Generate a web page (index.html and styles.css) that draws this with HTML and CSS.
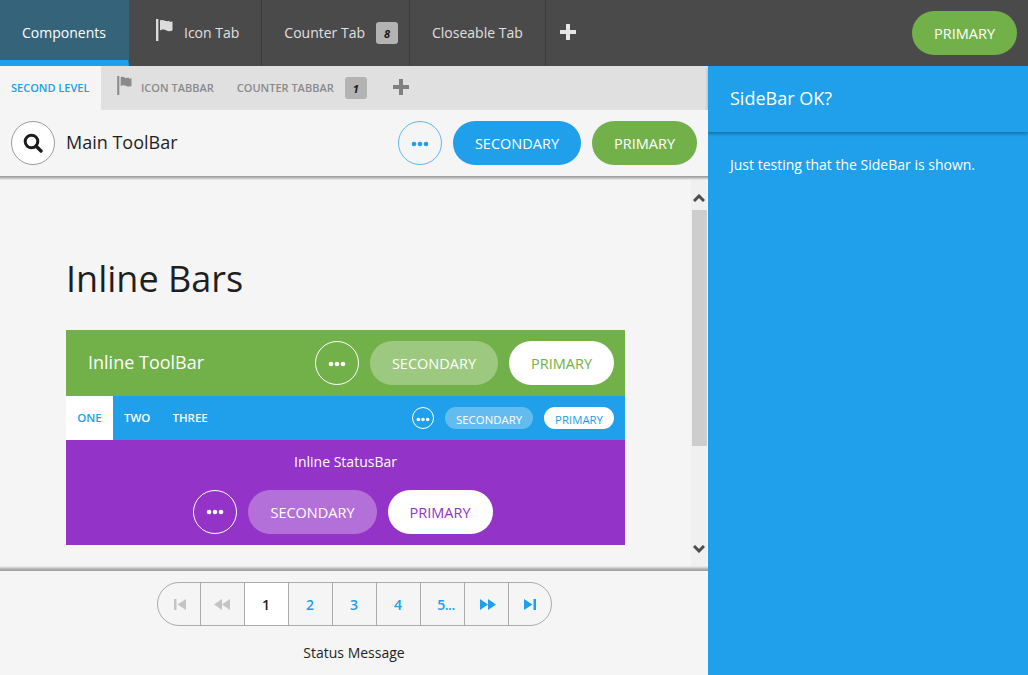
FILE: index.html
```html
<!DOCTYPE html>
<html lang="en">
<head>
<meta charset="utf-8">
<title>Inline Bars</title>
<link rel="stylesheet" href="styles.css">
</head>
<body>
<svg class="defs" width="0" height="0" aria-hidden="true">
  <defs>
    <symbol id="flag" viewBox="0 0 18 22"><path d="M0 0h2.400v22H0z"/><path d="M4 1.500c1.500-.8 3-.6 4.500.1s3 .8 5 .2v1.300l3-.6v9c-2.500 1-4.500.8-6 0s-3-1-3.500-.9-2 .4-3 .9z"/></symbol>
    <symbol id="plus" viewBox="0 0 16 16"><path d="M6 0h4v6h6v4h-6v6H6v-6H0V6h6z"/></symbol>
    <symbol id="dots" viewBox="0 0 18 6"><circle cx="3" cy="3" r="2.300"/><circle cx="9" cy="3" r="2.300"/><circle cx="15" cy="3" r="2.300"/></symbol>
  </defs>
</svg>
<div class="app">
  <header class="topbar">
    <nav class="top-tabs">
      <a class="top-tab is-active">Components</a>
      <a class="top-tab tab-icon"><svg class="flag-lg"><use href="#flag"/></svg>Icon Tab</a>
      <a class="top-tab tab-counter">Counter Tab<span class="badge">8</span></a>
      <a class="top-tab">Closeable Tab</a>
      <a class="top-add"><svg class="plus"><use href="#plus"/></svg></a>
    </nav>
    <button class="btn btn-green">Primary</button>
  </header>
  <div class="below">
    <main class="main">
      <nav class="sub-tabs">
        <a class="sub-tab is-active">Second Level</a>
        <a class="sub-tab"><svg class="flag-sm"><use href="#flag"/></svg>Icon TabBar</a>
        <a class="sub-tab">Counter TabBar<span class="badge">1</span></a>
        <a class="sub-add"><svg class="plus"><use href="#plus"/></svg></a>
      </nav>
      <div class="toolbar">
        <button class="round round-search" aria-label="Search">
          <svg width="20" height="20" viewBox="0 0 20 20"><circle cx="8.500" cy="8.500" r="6.300" fill="none" stroke="#1c1c1c" stroke-width="3"/><path d="M13 13l5 5" stroke="#1c1c1c" stroke-width="3.400" stroke-linecap="round"/></svg>
        </button>
        <span class="toolbar-title">Main ToolBar</span>
        <span class="spacer"></span>
        <button class="round round-blue" aria-label="More"><svg class="dots dots-low"><use href="#dots"/></svg></button>
        <button class="btn btn-blue">Secondary</button>
        <button class="btn btn-green">Primary</button>
      </div>
      <div class="scroll-area">
        <section class="content">
          <h1 class="heading">Inline Bars</h1>
          <div class="inline-bars">
            <div class="inline-toolbar">
              <span class="inline-title">Inline ToolBar</span>
              <span class="spacer"></span>
              <button class="round round-white" aria-label="More"><svg class="dots dots-low"><use href="#dots"/></svg></button>
              <button class="btn btn-ghost">Secondary</button>
              <button class="btn btn-white txt-green">Primary</button>
            </div>
            <div class="inline-tabs">
              <a class="mini-tab is-active">One</a>
              <a class="mini-tab">Two</a>
              <a class="mini-tab">Three</a>
              <span class="spacer"></span>
              <button class="round-sm" aria-label="More"><svg class="dots-sm"><use href="#dots"/></svg></button>
              <button class="btn-sm btn-sm-ghost">Secondary</button>
              <button class="btn-sm btn-sm-white">Primary</button>
            </div>
            <div class="inline-status">
              <div class="status-text">Inline StatusBar</div>
              <div class="status-actions">
                <button class="round round-white" aria-label="More"><svg class="dots"><use href="#dots"/></svg></button>
                <button class="btn btn-ghost">Secondary</button>
                <button class="btn btn-white txt-purple">Primary</button>
              </div>
            </div>
          </div>
        </section>
        <div class="scrollbar">
          <svg class="arrow" viewBox="0 0 12 8"><path d="M1 7l5-5 5 5" fill="none" stroke="#4d4d4d" stroke-width="3"/></svg>
          <div class="scroll-thumb"></div>
          <div class="spacer"></div>
          <svg class="arrow" viewBox="0 0 12 8"><path d="M1 1l5 5 5-5" fill="none" stroke="#4d4d4d" stroke-width="3"/></svg>
        </div>
      </div>
      <footer class="statusbar">
        <div class="pager">
          <a class="page muted"><svg class="ico-first" width="12" height="11" viewBox="0 0 12 11"><path d="M0 0h2.500v11H0zM12 0v11L3.500 5.500z"/></svg></a>
          <a class="page muted"><svg width="16" height="11" viewBox="0 0 16 11"><path d="M8 0v11L0 5.500zM16 0v11L8 5.500z"/></svg></a>
          <a class="page current">1</a>
          <a class="page">2</a>
          <a class="page">3</a>
          <a class="page">4</a>
          <a class="page page-more">5...</a>
          <a class="page"><svg class="ico-next" width="16" height="11" viewBox="0 0 16 11"><path d="M0 0l8 5.500L0 11zM8 0l8 5.500L8 11z"/></svg></a>
          <a class="page"><svg width="12" height="11" viewBox="0 0 12 11"><path d="M0 0l8.500 5.500L0 11zM9.500 0H12v11H9.500z"/></svg></a>
        </div>
        <div class="status-msg">Status Message</div>
      </footer>
    </main>
    <aside class="sidebar">
      <div class="side-head">SideBar OK?</div>
      <div class="side-body">Just testing that the SideBar is shown.</div>
    </aside>
  </div>
</div>
</body>
</html>
```
FILE: styles.css
```css
* { box-sizing: border-box; }
html, body { margin: 0; height: 100%; }
body { font-family: "Open Sans", "Liberation Sans", sans-serif; font-size: 14px; color: #1f1f1f; background: #f5f5f5; overflow: hidden; }
button { font: inherit; border: 0; padding: 0; margin: 0; cursor: pointer; }
a { display: flex; align-items: center; }
.defs { position: absolute; }
.spacer { flex: 1; }
.app { width: 1028px; height: 675px; display: flex; flex-direction: column; }

.topbar { height: 66px; flex: none; background: #4a4a4a; display: flex; align-items: center; padding-right: 11px; justify-content: space-between; }
.top-tabs { display: flex; height: 66px; color: #e0e0e0; }
.top-tab { height: 66px; padding: 0 22px 2px; border-right: 1px solid #3d3d3d; white-space: nowrap; }
.top-tab.is-active { width: 129px; padding-top: 4px; padding-bottom: 0; background: #35647a; color: #fff; border-bottom: 6px solid #209fea; border-right-color: #35647a; }
.tab-icon { padding: 0 22px 2px 27px; }
.tab-counter { padding-right: 11px; }
.flag-lg { width: 18px; height: 22px; fill: #dcdcdc; margin: -5px 10px 0 0; }
.flag-sm { width: 16px; height: 19px; fill: #8a8a8a; margin: -4px 8px 0 0; }
.badge { display: inline-flex; align-items: center; justify-content: center; width: 22px; height: 22px; margin: 2px 0 0 11px; border-radius: 3px; background: #b3b3b3; color: #1a1a1a; font-size: 11px; font-weight: 700; font-style: italic; }
.top-add { padding: 0 14px 2px; fill: #e6e6e6; }
.plus { width: 16px; height: 16px; display: block; }

.btn { height: 44px; padding: 0 22px; border-radius: 22px; font-size: 14.5px; text-transform: uppercase; white-space: nowrap; flex: none; }
.btn-green { background: #72b04a; color: #fff; }
.btn-blue { background: #209fea; color: #fff; }
.btn-ghost { background: rgba(255,255,255,.3); color: #fff; }
.btn-white { background: #fff; }
.txt-green { color: #72b04a; }
.txt-purple { color: #9333c8; }

.below { flex: 1; display: flex; min-height: 0; }
.main { width: 708px; flex: none; display: flex; flex-direction: column; }
.sidebar { flex: 1; background: #209fea; color: #fff; }
.side-head { height: 66px; padding: 0 22px 2px; display: flex; align-items: center; font-size: 18px; box-shadow: 0 2px 3px rgba(0,0,0,.28); }
.side-body { padding: 22px 22px; font-size: 14px; line-height: 22px; }

.sub-tabs { height: 44px; flex: none; display: flex; background: #e0e0e0; color: #8a8a8a; font-size: 11px; font-weight: 600; text-transform: uppercase; }
.sub-tab { padding: 0 11px 2px; white-space: nowrap; }
.sub-tab.is-active { background: #f5f5f5; color: #209fea; width: 101px; }
.sub-tab:nth-child(2) { padding: 0 12px 2px 16px; }
.sub-add { padding: 0 12px 2px 15px; fill: #808080; }

.toolbar { height: 66px; flex: none; display: flex; align-items: center; gap: 11px; padding: 0 11px; background: #f5f5f5; box-shadow: 0 1px 0 #a0a0a0, 0 2px 0 #b4b4b4, 0 3px 0 #cccccc, 0 4px 0 #e6e6e6; position: relative; z-index: 1; }
.toolbar-title { font-size: 18px; color: #1f1f1f; padding-bottom: 2px; }
.round { width: 44px; height: 44px; flex: none; border-radius: 50%; display: flex; align-items: center; justify-content: center; background: transparent; }
.round-search { background: #fff; border: 1px solid #9c9c9c; }
.round-blue { border: 1px solid #5db8ee; fill: #209fea; }
.round-white { border: 1px solid #fff; fill: #fff; }
.dots { width: 18px; height: 6px; display: block; }
.dots-low { margin-top: 2px; }

.scroll-area { flex: 1; min-height: 0; display: flex; background: #f5f5f5; padding-right: 1px; }
.content { flex: 1; padding: 0 66px; overflow: hidden; }
.heading { margin: 80px 0 28px; font-size: 36px; font-weight: 400; line-height: 46px; color: #1f1f1f; }
.inline-bars { width: 559px; }
.inline-toolbar { height: 66px; display: flex; align-items: center; gap: 11px; padding: 0 11px 0 22px; background: #72b04a; color: #fff; }
.inline-title { font-size: 18px; padding-bottom: 2px; }
.inline-tabs { height: 44px; display: flex; align-items: center; padding-right: 11px; background: #209fea; color: #fff; font-size: 11.5px; font-weight: 600; text-transform: uppercase; }
.mini-tab { height: 44px; padding: 0 11px 2px; }
.mini-tab.is-active { width: 47px; justify-content: center; background: #fff; color: #209fea; }
.round-sm { width: 22px; height: 22px; flex: none; margin-right: 11px; border-radius: 50%; border: 1px solid #fff; background: transparent; fill: #fff; display: flex; align-items: center; justify-content: center; }
.dots-sm { width: 14px; height: 5px; display: block; margin-top: 2px; }
.btn-sm { height: 22px; padding: 2px 11px 0; border-radius: 11px; font-size: 11.4px; font-weight: 400; text-transform: uppercase; flex: none; }
.btn-sm-ghost { background: rgba(255,255,255,.3); color: #fff; margin-right: 11px; }
.btn-sm-white { background: #fff; color: #209fea; }
.inline-status { height: 105px; background: #9333c8; color: #fff; text-align: center; padding-top: 11px; }
.status-text { font-size: 14px; line-height: 22px; }
.status-actions { display: flex; justify-content: center; gap: 11px; margin-top: 17px; padding-right: 5px; }

.scrollbar { width: 16px; flex: none; display: flex; flex-direction: column; align-items: center; background: #f0f0f0; padding: 18px 0 18px; }
.arrow { width: 12px; height: 8px; flex: none; }
.scroll-thumb { width: 15px; height: 236px; margin-top: 8px; margin-left: 1px; background: #cdcdcd; flex: none; }

.statusbar { height: 104px; flex: none; background: #f5f5f5; display: flex; flex-direction: column; align-items: center; padding-top: 11px; position: relative; z-index: 1; box-shadow: 0 -1px 0 #a3a3a3, 0 -2px 0 #aaaaaa, 0 -3px 0 #bcbcbc, 0 -4px 0 #d4d4d4, 0 -5px 0 #e8e8e8; }
.pager { display: flex; height: 44px; border: 1px solid #ababab; border-radius: 22px; overflow: hidden; }
.page { width: 44px; justify-content: center; border-right: 1px solid #ababab; color: #209fea; fill: #209fea; font-weight: 600; font-size: 14px; }
.page:first-child { width: 43px; }
.page:last-child { border-right: 0; width: 42px; }
.page.muted { fill: #c4c4c4; }
.page.current { background: #fff; color: #1f1f1f; }
.page-more { padding-left: 8px; letter-spacing: -.5px; }
.ico-first { margin-left: 3px; }
.ico-next { margin-left: 4px; }
.status-msg { margin-top: 16px; font-size: 14px; line-height: 22px; color: #1f1f1f; }
```
